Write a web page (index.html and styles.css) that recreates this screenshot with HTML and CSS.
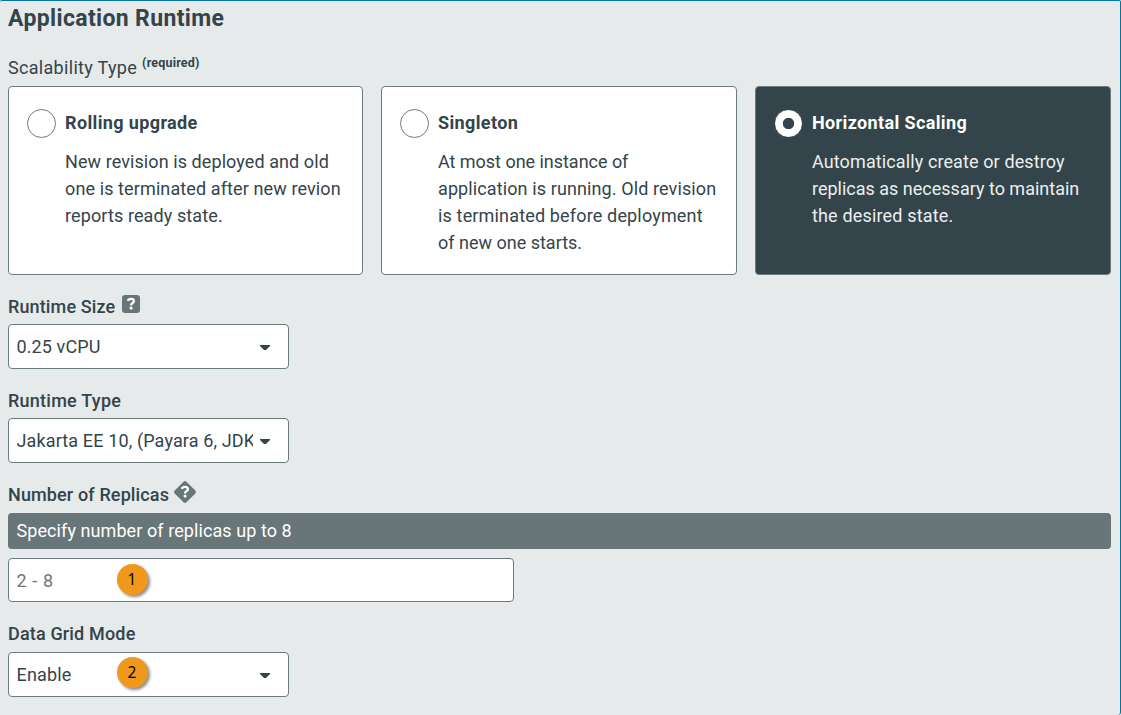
FILE: index.html
```html
<!DOCTYPE html>
<html lang="en">
<head>
<meta charset="utf-8">
<title>Application Runtime</title>
<link rel="stylesheet" href="styles.css">
</head>
<body>
<main class="panel">
  <h2 class="title"><span class="t-title">Application Runtime</span></h2>
  <div class="label label-scal"><span class="t-scal">Scalability Type</span> <sup class="required">(required)</sup></div>
  <div class="cards">
    <label class="card">
      <span class="radio"></span>
      <span class="card-body">
        <strong class="card-title t-roll">Rolling upgrade</strong>
        <span class="card-text"><span class="l1">New revision is deployed and old</span><br><span class="l2">one is terminated after new revion</span><br><span class="l3">reports ready state.</span></span>
      </span>
    </label>
    <label class="card">
      <span class="radio"></span>
      <span class="card-body">
        <strong class="card-title t-single">Singleton</strong>
        <span class="card-text"><span class="l4">At most one instance of</span><br><span class="l5">application is running. Old revision</span><br><span class="l6">is terminated before deployment</span><br><span class="l7">of new one starts.</span></span>
      </span>
    </label>
    <label class="card card-selected">
      <span class="radio"></span>
      <span class="card-body">
        <strong class="card-title t-horiz">Horizontal Scaling</strong>
        <span class="card-text"><span class="l8">Automatically create or destroy</span><br><span class="l9">replicas as necessary to maintain</span><br><span class="l10">the desired state.</span></span>
      </span>
    </label>
  </div>

  <div class="label label-size"><span class="t-size">Runtime Size</span>
    <svg class="help-square" viewBox="0 0 18 18"><rect width="18" height="18" rx="3" fill="#687679"/><path d="M5.9 5.9Q6.5 3.9 9 3.9Q11.9 3.9 11.9 6.2Q11.9 7.5 10.4 8.2Q9.1 8.9 9.1 10.4" fill="none" stroke="#fff" stroke-width="2.4"/><rect x="7.7" y="11.8" width="2.8" height="2.7" rx=".7" fill="#fff"/></svg>
  </div>
  <div class="select"><span class="value v-cpu">0.25 vCPU</span><svg class="caret" viewBox="0 0 10 6"><path d="M0 0H10V1L6 5H4L0 1Z" fill="#33444a"/></svg></div>

  <div class="label label-type"><span class="t-type">Runtime Type</span></div>
  <div class="select"><span class="value v-jakarta">Jakarta EE 10, (Payara 6, JDK</span><svg class="caret" viewBox="0 0 10 6"><path d="M0 0H10V1L6 5H4L0 1Z" fill="#33444a"/></svg></div>

  <div class="label label-replicas"><span class="t-replicas">Number of Replicas</span>
    <svg class="help-diamond" viewBox="0 0 24 24"><rect x="3.7" y="3.7" width="16.6" height="16.6" rx="2" transform="rotate(45 12 12)" fill="#687679"/><path d="M8.9 8.9Q9.5 6.9 12 6.9Q14.9 6.9 14.9 9.2Q14.9 10.5 13.4 11.2Q12.1 11.9 12.1 13.4" fill="none" stroke="#fff" stroke-width="2.4"/><rect x="10.7" y="14.8" width="2.8" height="2.7" rx=".7" fill="#fff"/></svg>
  </div>
  <div class="hint"><span class="t-hint">Specify number of replicas up to 8</span></div>
  <div class="input"><span class="placeholder">2 - 8</span><span class="badge">1</span></div>

  <div class="label label-grid"><span class="t-grid">Data Grid Mode</span></div>
  <div class="select"><span class="value v-enable">Enable</span><svg class="caret" viewBox="0 0 10 6"><path d="M0 0H10V1L6 5H4L0 1Z" fill="#33444a"/></svg><span class="badge">2</span></div>
</main>
</body>
</html>
```
FILE: styles.css
```css
* { box-sizing: border-box; }
body { margin: 0; background: #e6eaeb; color: #33444a; font: 18px/27px Roboto, "Liberation Sans", sans-serif; }
.panel { width: 1121px; height: 715px; padding: 0 9px 0 8px; border-top: 1px solid #0077a8; border-right: 1px solid #00779f; border-radius: 2px 2px 3px 0; overflow: hidden; white-space: nowrap; }
.title { margin: 0; height: 36px; font-size: 23px; line-height: 35px; font-weight: 700; }
.label { display: flex; align-items: center; height: 27px; font-weight: 500; }
.label-scal { margin-top: 17px; height: 32px; padding-bottom: 5px; font-weight: 400; }
.required { font-size: 12.5px; font-weight: 700; line-height: 14px; margin: -9px 0 0 5px; letter-spacing: .2px; }
.cards { display: grid; grid-template-columns: 355px 356px 356px; gap: 18px; height: 189px; }
.card { display: flex; gap: 9px; height: 189px; padding: 22px 18px 0; border: 1px solid #6b7b7f; border-radius: 4px; background: #fff; }
.radio { flex: none; width: 29px; height: 29px; border: 1px solid #6b7b7f; border-radius: 50%; background: #fff; }
.card-body { display: flex; flex-direction: column; margin-top: -1px; }
.card-title { line-height: 29px; letter-spacing: .37px; }
.card-text { margin-top: 11px; }
.card-selected { background: #33444a; color: #fff; }
.card-selected .radio { border-color: #33444a; background: radial-gradient(circle, #33444a 5.3px, #fff 6.1px); }
.card-selected .card-text { color: #eceff0; }
.label-size { margin-top: 18px; height: 31px; padding-bottom: 4px; }
.help-square { width: 18px; height: 18px; margin: -5px 0 0 7px; }
.select, .input { position: relative; display: flex; align-items: center; width: 281px; height: 45px; padding: 0 18px 0 7.5px; border: 1px solid #6b7b7f; border-radius: 4px; background: #fff; }
.value { flex: none; width: 236px; overflow: hidden; }
.caret { width: 10px; height: 6px; margin: 3px 0 0 7.5px; }
.label-type, .label-replicas { margin-top: 18px; height: 31px; padding-bottom: 4px; }
.label-replicas { height: 32px; padding-bottom: 5px; }
.help-diamond { width: 24px; height: 24px; margin: -5px 0 0 4px; }
.hint { height: 36px; padding-left: 8.5px; line-height: 35px; border-radius: 4px; background: #687679; color: #fff; }
.input { width: 506px; height: 44px; margin-top: 9px; }
.placeholder { color: #757575; letter-spacing: .6px; }
.badge { position: absolute; left: 108px; top: 5px; width: 31px; height: 31px; border-radius: 50%; background: #f0981b; box-shadow: 2px 2px 3px rgba(0,0,0,.45); color: #000; font: 15.5px/31px "Noto Sans", sans-serif; text-align: center; padding-right: 1px; }
.select .badge { top: 4px; }
.label-grid { margin-top: 18px; height: 32px; padding-bottom: 5px; }

/* tracking */
.t-title { letter-spacing: .35px; }
.t-scal { letter-spacing: .31px; }
.l1, .t-hint { letter-spacing: .08px; }
.l2, .l3, .l5, .l8, .v-cpu { letter-spacing: .11px; }
.l4 { letter-spacing: -.03px; }
.l6, .l10, .t-grid, .v-enable { letter-spacing: .16px; }
.t-size, .t-replicas, .v-jakarta { letter-spacing: .13px; }
.t-type { letter-spacing: .25px; }
```
